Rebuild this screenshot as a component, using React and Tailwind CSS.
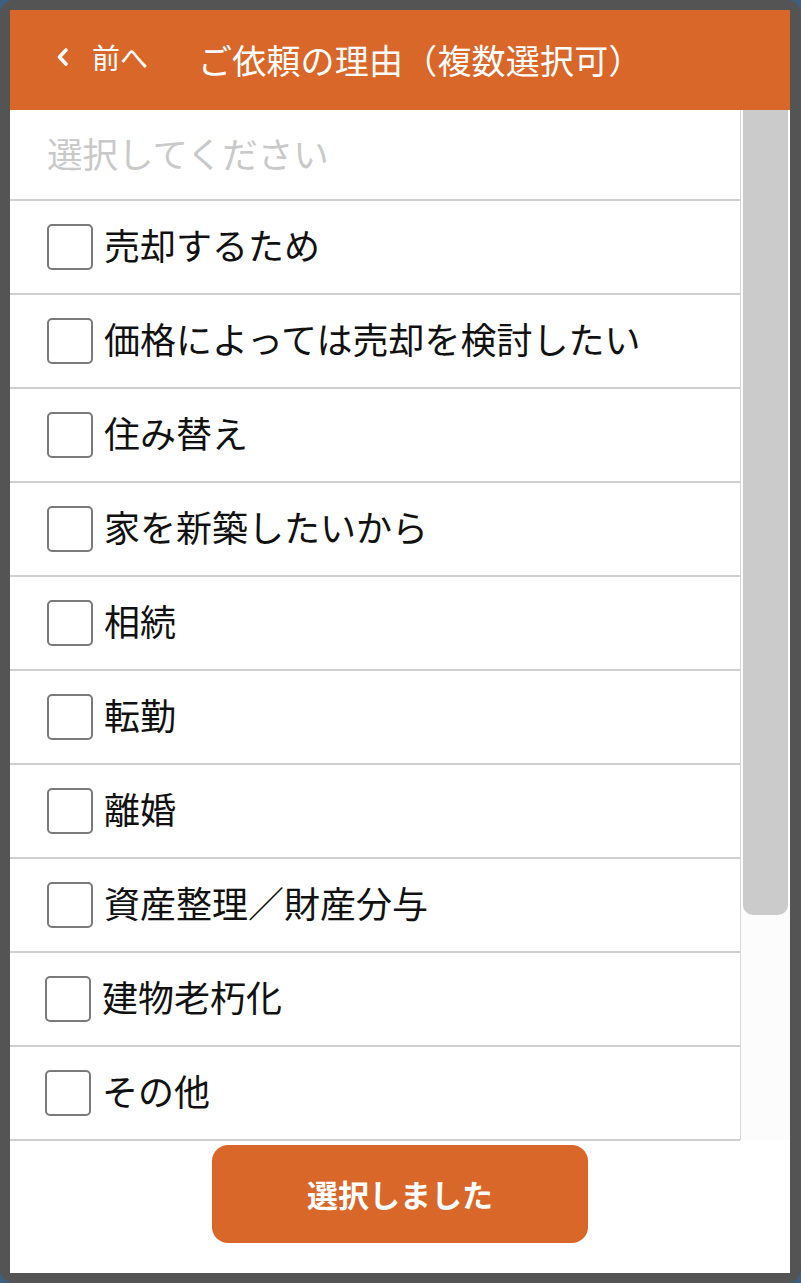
const reasons = [
  "売却するため",
  "価格によっては売却を検討したい",
  "住み替え",
  "家を新築したいから",
  "相続",
  "転勤",
  "離婚",
  "資産整理／財産分与",
  "建物老朽化",
  "その他",
];

const jp = { fontFamily: '"Noto Sans CJK JP", "Noto Sans", sans-serif' };

export default function App() {
  return (
    <div className="h-[1283px] w-[801px] bg-[#3f5f80]" style={jp}>
      <div className="h-full w-full rounded-[14px] bg-[#545454] pl-[10px] pr-[11px] pt-[10px] pb-[10px]">
        <div className="flex h-full flex-col bg-white">
          {/* header */}
          <div className="flex h-[100px] shrink-0 items-center bg-[#d9672a] text-white">
            <div className="flex items-center pl-[41px] pb-[6px]">
              <svg width="20" height="26" viewBox="0 0 20 26">
                <path d="M15 6 L8.5 13 L15 20" fill="none" stroke="white" strokeWidth="3.6" strokeLinecap="round" strokeLinejoin="round" />
              </svg>
              <span className="ml-[21px] text-[28px] leading-none">前へ</span>
            </div>
            <div className="ml-[50px] text-[34px] leading-none tracking-[0.2px]">ご依頼の理由（複数選択可）</div>
          </div>

          {/* list + scrollbar */}
          <div className="flex h-[1030px] shrink-0">
            <div className="flex-1 border-r border-[#d6d6d6]">
              <div className="flex h-[91px] items-center border-b-2 border-[#cfcfcf] pl-[37px] pb-[4px]">
                <span className="text-[35.5px] leading-none text-[#c9c9c9]">選択してください</span>
              </div>
              {reasons.map((r, i) => (
                <div
                  key={r}
                  className={`flex h-[94px] items-center border-b-2 border-[#cfcfcf] ${i >= 8 ? "pl-[35px]" : "pl-[37px]"}`}
                >
                  <div className="h-[46px] w-[46px] shrink-0 rounded-[5px] border-2 border-[#7a7a7a] bg-white" />
                  <span className="ml-[11px] -mt-[6px] text-[36px] leading-none text-[#111]">{r}</span>
                </div>
              ))}
            </div>
            <div className="w-[49px] shrink-0 bg-[#fcfcfc] pl-[2px] pr-[2px]">
              <div className="h-[805px] rounded-b-[10px] bg-[#cbcbcb]" />
            </div>
          </div>

          {/* footer */}
          <div className="flex flex-1 justify-center pt-[5px]">
            <button className="h-[98px] w-[376px] rounded-[16px] bg-[#d9672a] text-[31px] font-bold text-white">
              選択しました
            </button>
          </div>
        </div>
      </div>
    </div>
  );
}
